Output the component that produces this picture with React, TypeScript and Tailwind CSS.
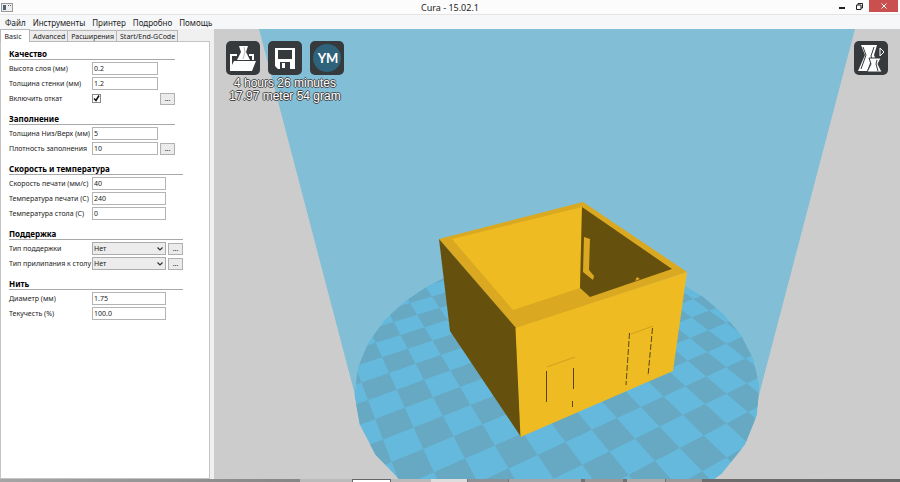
// src/App.tsx
import React from "react";

type Point = [number, number];

// Camera of the 3D view: pitch 60deg, yaw 30deg, looking at the build volume
const SCALE = 544.4;
const CENTER: Point = [343, 225.5];
const DEPTH = 423.75;
const RISE = 74.7;
const RADIUS = 150;
const CELL = 20;

const project = (u: number, v: number): string => {
  const x = 0.866 * u - 0.5 * v;
  const y = 0.5 * u + 0.866 * v;
  const depth = DEPTH + 0.866 * y;
  const sx = CENTER[0] + (SCALE * x) / depth;
  const sy = CENTER[1] + (SCALE * (RISE - 0.5 * y)) / depth;
  return `${sx.toFixed(1)},${sy.toFixed(1)}`;
};

const discPoints = Array.from({ length: 32 }, (_, i) => {
  const angle = (i * Math.PI) / 16;
  return project(RADIUS * Math.cos(angle), RADIUS * Math.sin(angle));
}).join(" ");

const darkCells: string[] = [];
for (let i = -8; i < 8; i++) {
  for (let j = -8; j < 8; j++) {
    if ((i + j) % 2 !== 0) continue;
    const u = i * CELL;
    const v = j * CELL;
    darkCells.push(
      [
        project(u, v),
        project(u + CELL, v),
        project(u + CELL, v + CELL),
        project(u, v + CELL),
      ].join(" ")
    );
  }
}

const Scene: React.FC = () => (
  <svg
    viewBox="0 0 686 450"
    preserveAspectRatio="xMidYMin slice"
    className="block w-full h-full"
    aria-label="3D view"
  >
    <defs>
      <clipPath id="disc">
        <polygon points={discPoints} />
      </clipPath>
    </defs>
    <polygon points="45,0 641,0 545,366 542,380 144,380 141,366" fill="#82bfd6" />
    <polygon points={discPoints} fill="#65b9dc" />
    <g clipPath="url(#disc)" fill="#67a8c3">
      {darkCells.map((points) => (
        <polygon key={points} points={points} />
      ))}
    </g>

    {/* rim and floor, then the visible walls */}
    <polygon points="225,210 369,173 473,243 302,300" fill="#daa921" />
    <polygon points="238,210 368,178 366,259 299,281" fill="#eebb22" />
    <polygon points="368,178 458,240 376,268 366,259" fill="#66500d" />
    <polygon points="370,208 376,210 375,241 380,247 379,251 369,243" fill="#daa921" />
    <polygon points="423,248 426,250 421,252" fill="#daa921" />
    <polygon points="225,210 302,299 307,408 236,302" fill="#66500d" />
    <polygon points="301.5,299 473,243 459,342 306.5,408" fill="#eebb22" />

    <g stroke="#5a470f" strokeWidth="1" fill="none">
      <path d="M332.5 342V373M359.5 339V360M358.5 372V378" />
      <path d="M415.5 304L412 356M438.5 299L434 347" strokeDasharray="6 2" />
      <path d="M333 338L361 328M417 305L439 297" stroke="#d2a01e" />
    </g>
  </svg>
);

const LoadIcon = () => (
  <svg viewBox="0 0 34 34" className="w-full h-full" aria-hidden="true">
    <path d="M4 29V13h7v2H6v9l2-4h22l-4 10H4z" fill="#fff" />
    <path d="M23 13h5v6h-2v-4h-3z" fill="#fff" />
    <path d="M13 5h9l-2 6 4 8H11l4-8z" fill="#fff" />
    <path d="M18 6l1 5-2 7" stroke="#bbb" fill="none" />
    <path d="M7 19.5h22" stroke="#363a3c" fill="none" />
  </svg>
);

const SaveIcon = () => (
  <svg viewBox="0 0 34 34" className="w-full h-full" aria-hidden="true">
    <path
      fill="#fff"
      fillRule="evenodd"
      d="M7 7h20v21H10l-3-3zM10 9v9h14V9zM12 21v7h10v-7zM14 22h3v5h-3z"
    />
  </svg>
);

const YouMagineIcon = () => (
  <svg viewBox="0 0 34 34" className="w-full h-full" aria-hidden="true">
    <circle cx="17" cy="17" r="14" fill="#2f637b" />
    <text
      x="18"
      y="22"
      textAnchor="middle"
      fill="#fff"
      className="font-['Lato',sans-serif] text-[13px] font-bold"
    >
      YM
    </text>
  </svg>
);

const ViewModeIcon = () => (
  <svg viewBox="0 0 34 34" className="w-full h-full" aria-hidden="true">
    <path d="M7 4h16l-3 10 2 5-6 11H4l7-16z" fill="#fff" />
    <path d="M9 6l3 8-5 14M20 6l-3 9 1 3-4 11" stroke="#363a3c" fill="none" />
    <path d="M15 17h12l-3 6 4 8H13l4-8z" fill="#fff" stroke="#363a3c" />
    <path d="M23 19l-1 4 2 7" stroke="#363a3c" fill="none" />
    <path d="M26 7l4 4-4 4z" stroke="#fff" fill="none" />
  </svg>
);

const ToolButton: React.FC<{ label: string; children: React.ReactNode }> = ({
  label,
  children,
}) => (
  <button
    aria-label={label}
    className="w-[34px] h-[34px] rounded-[5px] bg-[#363a3c] overflow-hidden"
  >
    {children}
  </button>
);

type Field = {
  id: string;
  label: string;
  type: "text" | "check" | "select";
  value?: string;
  more?: boolean;
};

type Section = { title: string; wide: boolean; fields: Field[] };

const sections: Section[] = [
  {
    title: "Качество",
    wide: false,
    fields: [
      { id: "layer", label: "Высота слоя (мм)", type: "text", value: "0.2" },
      { id: "wall", label: "Толщина стенки (мм)", type: "text", value: "1.2" },
      { id: "retract", label: "Включить откат", type: "check", more: true },
    ],
  },
  {
    title: "Заполнение",
    wide: false,
    fields: [
      { id: "solid", label: "Толщина Низ/Верх (мм)", type: "text", value: "5" },
      { id: "fill", label: "Плотность заполнения", type: "text", value: "10", more: true },
    ],
  },
  {
    title: "Скорость и температура",
    wide: true,
    fields: [
      { id: "speed", label: "Скорость печати (мм/с)", type: "text", value: "40" },
      { id: "temp", label: "Температура печати (C)", type: "text", value: "240" },
      { id: "bed", label: "Температура стола (C)", type: "text", value: "0" },
    ],
  },
  {
    title: "Поддержка",
    wide: true,
    fields: [
      { id: "support", label: "Тип поддержки", type: "select", value: "Нет", more: true },
      { id: "adhesion", label: "Тип прилипания к столу", type: "select", value: "Нет", more: true },
    ],
  },
  {
    title: "Нить",
    wide: true,
    fields: [
      { id: "diameter", label: "Диаметр (мм)", type: "text", value: "1.75" },
      { id: "flow", label: "Текучесть (%)", type: "text", value: "100.0" },
    ],
  },
];

const FieldControl: React.FC<{ field: Field }> = ({ field }) => {
  if (field.type === "check") {
    return (
      <span className="grid w-[9px] h-[9px]">
        <input
          id={field.id}
          type="checkbox"
          defaultChecked
          className="peer appearance-none col-start-1 row-start-1 w-[9px] h-[9px] border border-[#8a8a8a] bg-white"
        />
        <svg
          viewBox="0 0 9 9"
          className="col-start-1 row-start-1 w-[9px] h-[9px] pointer-events-none invisible peer-checked:visible"
          aria-hidden="true"
        >
          <path d="M2 4.5l2 2 3-5" stroke="#111" strokeWidth="1.5" fill="none" />
        </svg>
      </span>
    );
  }
  if (field.type === "select") {
    return (
      <span className="grid w-full">
        <select
          id={field.id}
          defaultValue={field.value}
          className="appearance-none col-start-1 row-start-1 w-full h-[13px] border border-[#acacac] bg-[#ececec] pl-px leading-[11px]"
        >
          <option>{field.value}</option>
        </select>
        <svg
          viewBox="0 0 6 4"
          className="col-start-1 row-start-1 w-[6px] h-[4px] mr-[3px] justify-self-end self-center pointer-events-none"
          aria-hidden="true"
        >
          <path d="M.5.5L3 3 5.5.5" stroke="#333" strokeWidth="1.2" fill="none" />
        </svg>
      </span>
    );
  }
  return (
    <input
      id={field.id}
      type="text"
      defaultValue={field.value}
      className="w-full h-[13px] border border-[#b4b4b4] bg-white px-px leading-[11px]"
    />
  );
};

const SettingsSection: React.FC<{ section: Section }> = ({ section }) => (
  <section className={section.wide ? "w-[174px]" : "w-[166px]"}>
    <h2 className="h-[12px] mb-px border-b border-[#a8a8a8] text-[8px] leading-[11px] font-bold text-black whitespace-nowrap">
      {section.title}
    </h2>
    {section.fields.map((field) => (
      <div key={field.id} className="flex items-center h-[15px]">
        <label htmlFor={field.id} className="w-[83px] shrink-0 whitespace-nowrap">
          {field.label}
        </label>
        <div className={section.wide ? "flex w-[74px]" : "flex w-[66px]"}>
          <FieldControl field={field} />
        </div>
        {field.more && (
          <button
            aria-label={`${field.label}: настройки`}
            className="ml-[2px] w-[15px] h-[12px] border border-[#b0b0b0] bg-[#ebebeb] leading-[6px]"
          >
            ...
          </button>
        )}
      </div>
    ))}
  </section>
);

const menus = ["Файл", "Инструменты", "Принтер", "Подробно", "Помощь"];
const tabs = ["Basic", "Advanced", "Расширения", "Start/End-GCode"];

const App: React.FC = () => {
  return (
    <div className="flex flex-col h-screen overflow-hidden bg-[#f0f0f0] text-[#222] font-['Noto_Sans',sans-serif]">
      <header className="flex items-start h-[15px] shrink-0 bg-[#fcfcfc] border-b border-[#e4e4e4]">
        <svg viewBox="0 0 12 9" className="w-[12px] h-[9px] mt-[3px] ml-px" aria-hidden="true">
          <rect x=".5" y=".5" width="11" height="8" fill="#eee" stroke="#999" />
          <rect x="2" y="2" width="3" height="5" fill="#4c6472" />
          <path d="M7 2.5h1M9 2.5h1" stroke="#666" />
        </svg>
        <h1 className="flex-1 pl-[53px] text-center text-[9px] leading-[15px]">Cura - 15.02.1</h1>
        <button aria-label="Minimize" className="w-[16px] h-[13px] grid place-items-center">
          <span className="block w-[6px] h-[2px] mt-[3px] bg-[#222]" />
        </button>
        <button aria-label="Restore" className="w-[19px] h-[13px] grid place-items-center">
          <svg viewBox="0 0 7 7" className="w-[7px] h-[7px]" aria-hidden="true">
            <path d="M2 2V.5h4.5v4.5H5M.5 2H5v4.5H.5z" stroke="#222" fill="none" />
          </svg>
        </button>
        <button
          aria-label="Close"
          className="w-[29px] h-[12px] mr-[2px] grid place-items-center bg-[#c9504f]"
        >
          <svg viewBox="0 0 6 6" className="w-[6px] h-[6px]" aria-hidden="true">
            <path d="M.5.5l5 5M5.5.5l-5 5" stroke="#fff" fill="none" />
          </svg>
        </button>
      </header>

      <nav className="flex items-center gap-[7px] h-[14px] shrink-0 px-[5px] bg-[#f6f7f9] text-[8px] leading-[13px]">
        {menus.map((menu) => (
          <button key={menu}>{menu}</button>
        ))}
      </nav>

      <main className="flex flex-1 min-h-0">
        <aside className="flex flex-col w-[214px] shrink-0 pr-1 text-[7px] leading-[11px]">
          <div role="tablist" className="flex items-end h-[13px] shrink-0">
            {tabs.map((tab, i) => (
              <button
                key={tab}
                role="tab"
                aria-selected={i === 0}
                className={
                  i === 0
                    ? "h-[13px] w-[30px] pr-[4px] bg-white border-x border-t border-[#b8b8b8]"
                    : "h-[12px] pl-[3px] pr-[2px] bg-[#ececec] border-r border-y border-[#b8b8b8] whitespace-nowrap"
                }
              >
                {tab}
              </button>
            ))}
            <span className="flex-1 border-b border-[#c4c4c4]" />
          </div>
          <div className="flex flex-col gap-[7px] flex-1 pl-2 pt-[6px] bg-white border-x border-b border-[#c4c4c4]">
            {sections.map((section) => (
              <SettingsSection key={section.title} section={section} />
            ))}
          </div>
        </aside>

        <div className="relative flex-1 min-w-0 bg-[#cccccc] overflow-hidden">
          <Scene />
          <div className="absolute top-[12px] left-[12px] flex gap-2">
            <ToolButton label="Load model">
              <LoadIcon />
            </ToolButton>
            <ToolButton label="Save toolpath">
              <SaveIcon />
            </ToolButton>
            <ToolButton label="Share on YouMagine">
              <YouMagineIcon />
            </ToolButton>
          </div>
          <p className="absolute top-[48px] left-[12px] w-[118px] text-center whitespace-nowrap text-white text-[12px] leading-[13px] font-['Liberation_Sans',sans-serif] [text-shadow:1px_0_#444,-1px_0_#444,0_1px_#444,0_-1px_#444]">
            4 hours 26 minutes
            <br />
            17.97 meter 54 gram
          </p>
          <div className="absolute top-[12px] right-[12px] flex">
            <ToolButton label="View mode">
              <ViewModeIcon />
            </ToolButton>
          </div>
        </div>
      </main>

      {/* top edge of the taskbar */}
      <footer className="flex h-[3px] shrink-0 bg-linear-to-r from-[#a5a5a5] via-[#777] to-[#666]">
        <span className="ml-[300px] w-[52px] bg-[#bbb]" />
        <span className="w-[39px] bg-white border-t border-x border-[#666]" />
        <span className="w-[40px] bg-[#bbb]" />
        <span className="w-[36px] bg-[#ddd]" />
        <span className="w-[40px] ml-px bg-[#8c9296]" />
        <span className="w-[72px] ml-px bg-[#a2a6a8]" />
        <span className="w-[38px] ml-[4px] bg-[#999]" />
        <span className="w-[38px] ml-[4px] bg-[#aaa]" />
        <span className="w-[36px] ml-px bg-[#999]" />
      </footer>
    </div>
  );
};

export default App;
